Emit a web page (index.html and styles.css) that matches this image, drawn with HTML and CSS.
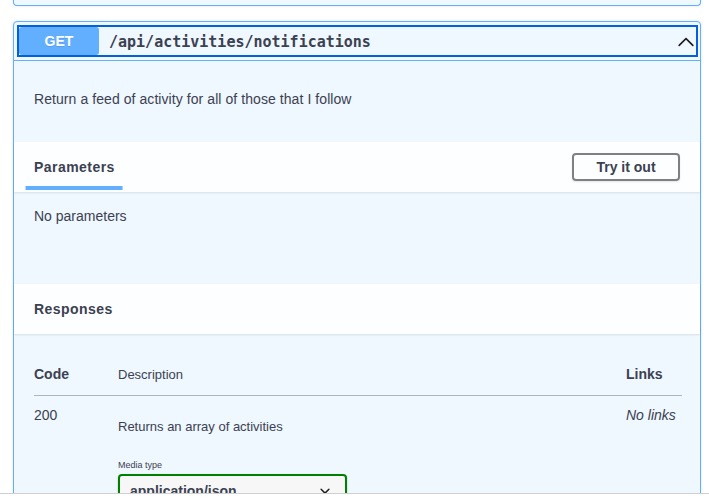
FILE: index.html
```html
<!DOCTYPE html>
<html lang="en">
<head>
<meta charset="utf-8">
<title>GET /api/activities/notifications</title>
<link rel="stylesheet" href="styles.css">
</head>
<body>
<div class="page">
  <div class="opblock prev"></div>
  <div class="opblock get">
    <div class="summary">
      <div class="summary-control">
        <span class="method">GET</span>
        <span class="path">/api/activities/notifications</span>
        <svg class="arrow" viewBox="0 0 20 20" width="20" height="20" aria-hidden="true">
          <path d="M17.418 14.908c-.32.32-.836.32-1.155 0L10 8.645l-6.263 6.263c-.32.32-.836.32-1.155 0-.32-.32-.32-.836 0-1.155l6.842-6.842c.32-.32.836-.32 1.155 0l6.84 6.842c.32.32.32.836 0 1.155z"/>
        </svg>
      </div>
    </div>
    <div class="body">
      <div class="desc"><p>Return a feed of activity for all of those that I follow</p></div>
      <div class="section-header">
        <h4 class="tab"><span>Parameters</span></h4>
        <button class="try">Try it out</button>
      </div>
      <div class="params"><p>No parameters</p></div>
      <div class="section-header">
        <h4>Responses</h4>
      </div>
      <div class="responses">
        <table class="resp-table">
          <thead>
            <tr>
              <td class="col-code">Code</td>
              <td class="col-desc head-desc">Description</td>
              <td class="col-links">Links</td>
            </tr>
          </thead>
          <tbody>
            <tr>
              <td class="col-code">200</td>
              <td class="col-desc">
                <p class="resp-text">Returns an array of activities</p>
                <div class="media">
                  <small class="media-title">Media type</small>
                  <div class="select">
                    <span>application/json</span>
                    <svg class="select-arrow" viewBox="0 0 20 20" width="20" height="20" aria-hidden="true">
                      <path d="M13.418 7.859a.695.695 0 01.978 0 .68.68 0 010 .969l-3.908 3.83a.697.697 0 01-.979 0l-3.908-3.83a.68.68 0 010-.969.695.695 0 01.978 0L10 11z"/>
                    </svg>
                  </div>
                </div>
              </td>
              <td class="col-links"><i>No links</i></td>
            </tr>
          </tbody>
        </table>
      </div>
    </div>
  </div>
</div>
<div class="bottom-bar"></div>
</body>
</html>
```

FILE: styles.css
```css
html, body {
  margin: 0;
  background: #fff;
}

body {
  font-family: "Liberation Sans", Arial, sans-serif;
  color: #3b4151;
  overflow: hidden;
}

.page {
  padding: 0 8px 0 13px;
}

.opblock {
  border: 1px solid #61affe;
  background: #eff7ff;
  border-radius: 4px;
  box-shadow: 0 0 3px rgba(0, 0, 0, 0.12);
  margin-bottom: 15px;
}

.prev {
  height: 5px;
  border-top: none;
  border-radius: 0 0 4px 4px;
}

.summary {
  padding: 5px 4px 5px 5px;
  border-bottom: 1px solid #61affe;
}

.summary-control {
  display: flex;
  align-items: center;
  outline: 2px solid #0060df;
}

.method {
  width: 80px;
  padding: 6px 0;
  text-align: center;
  background: #61affe;
  color: #fff;
  font-size: 14px;
  font-weight: 700;
  line-height: 16px;
  border-radius: 3px;
  text-shadow: 0 1px 0 rgba(0, 0, 0, 0.1);
}

.path {
  flex: 1;
  padding: 1px 10px 0;
  font-family: "DejaVu Sans Mono", monospace;
  font-size: 15px;
  font-weight: 600;
  color: #3b4151;
}

.arrow {
  display: block;
  fill: #1b1b1b;
}

.desc {
  padding: 15px 20px;
  margin-bottom: 5px;
}

.desc p {
  margin: 14px 0;
  font-size: 14px;
  line-height: 18px;
  letter-spacing: 0.07px;
}

.section-header {
  display: flex;
  align-items: center;
  justify-content: space-between;
  box-sizing: border-box;
  min-height: 50px;
  padding: 8px 20px;
  background: rgba(255, 255, 255, 0.8);
  box-shadow: 0 1px 2px rgba(0, 0, 0, 0.1);
}

h4 {
  margin: 0;
  font-size: 14px;
  font-weight: 700;
  line-height: 17px;
  letter-spacing: 0.45px;
  color: #3b4151;
}

.tab span {
  position: relative;
}

.tab span::after {
  content: "";
  position: absolute;
  left: 50%;
  bottom: -15px;
  width: 120%;
  height: 4px;
  transform: translateX(-50%);
  background: #61affe;
}

.try {
  box-sizing: border-box;
  width: 108px;
  height: 28px;
  padding: 0;
  border: 2px solid #808080;
  border-radius: 4px;
  background: transparent;
  font-family: "Liberation Sans", Arial, sans-serif;
  font-size: 14px;
  font-weight: 700;
  color: #3b4151;
  box-shadow: 0 1px 2px rgba(0, 0, 0, 0.1);
}

.params {
  box-sizing: border-box;
  min-height: 92px;
  padding: 15px 20px;
}

.params p {
  margin: 0;
  font-size: 14px;
  line-height: 18px;
}

.responses {
  padding: 20px 18px 20px 20px;
}

.resp-table {
  width: 100%;
  border-collapse: collapse;
}

.resp-table td {
  padding: 0;
  text-align: left;
  vertical-align: top;
}

.resp-table thead td {
  padding: 12px 0;
  border-bottom: 1px solid rgba(59, 65, 81, 0.2);
  font-size: 14px;
  font-weight: 700;
  line-height: 17px;
}

.resp-table thead td.head-desc {
  font-size: 13px;
  font-weight: 400;
}

.resp-table tbody td {
  padding: 10px 0;
  font-size: 14px;
  line-height: 18px;
}

.col-code {
  width: 84px;
}

.col-links {
  width: 56px;
}

.resp-text {
  margin: 12px 0 0;
  font-size: 13px;
  line-height: 17px;
}

.media {
  margin-top: 25px;
}

.media-title {
  display: block;
  font-size: 9px;
  line-height: 11px;
}

.select {
  display: flex;
  align-items: center;
  justify-content: space-between;
  box-sizing: border-box;
  width: 229px;
  margin-top: 3px;
  padding: 5px 10px;
  border: 2px solid #008000;
  border-radius: 4px;
  background: #f7f7f7;
  font-size: 14px;
  font-weight: 700;
  line-height: 16px;
  box-shadow: 0 1px 2px rgba(0, 0, 0, 0.25);
}

.select-arrow {
  display: block;
  fill: #1b1b1b;
}

.bottom-bar {
  position: fixed;
  left: 0;
  right: 0;
  bottom: 0;
  height: 4px;
  border-top: 1px solid #cfcfcf;
  background: #fff;
}
```
